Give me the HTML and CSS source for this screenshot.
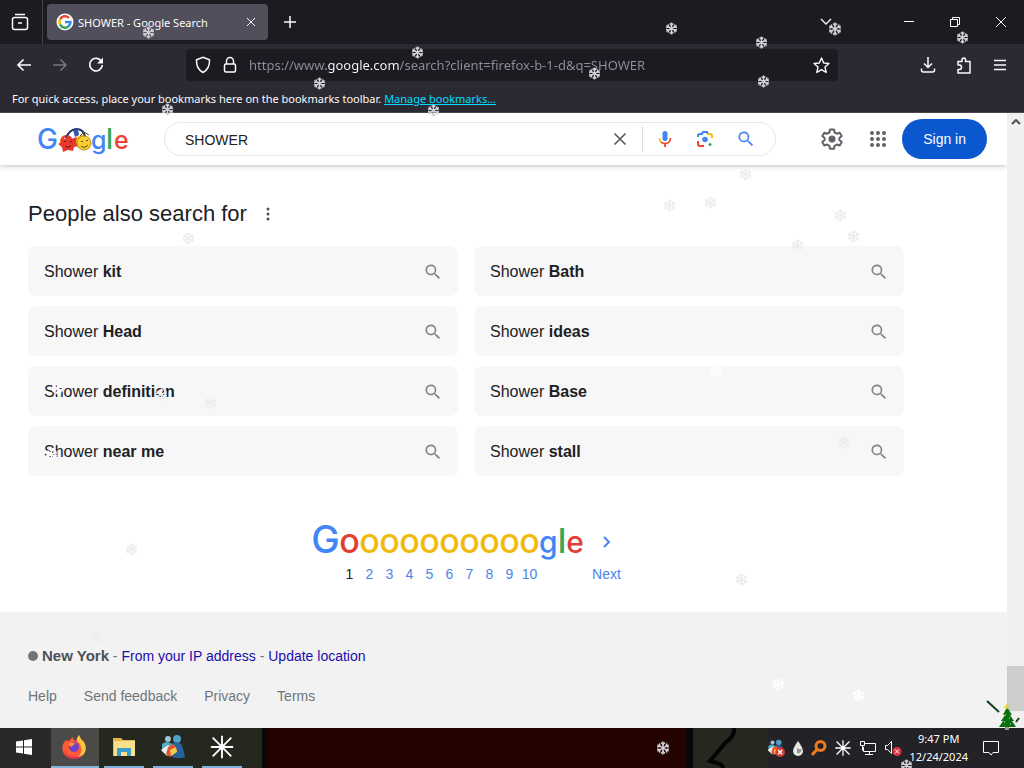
FILE: index.html
```html
<!DOCTYPE html>
<html lang="en">
<head>
  <meta charset="UTF-8">
  <title>SHOWER - Google Search</title>
  <link rel="stylesheet" href="styles.css">
</head>
<body>
  <svg class="defs" width="0" height="0" aria-hidden="true">
    <symbol id="search" viewBox="0 0 24 24">
      <path fill="currentColor" d="M15.5 14h-.8l-.3-.3A6.5 6.5 0 1 0 13.700 14.400l.3.3v.8l5 5 1.500-1.500-5-5zm-6 0a4.500 4.500 0 1 1 0-9 4.500 4.500 0 0 1 0 9z"/>
    </symbol>
    <symbol id="flake" viewBox="-7 -7 14 14">
      <g fill="none" stroke="currentColor" stroke-width="1.5">
        <path d="M0-6.500V6.500M-5.600-3.200L5.600 3.200M-5.600 3.200L5.600-3.200"/>
        <path d="M-2-5.500L0-3.500 2-5.500M-2 5.500L0 3.500 2 5.500M-5.800-1L-3-1.700-3.800-4.500M5.800 1L3 1.700 3.800 4.500M-5.800 1L-3 1.700-3.800 4.500M5.800-1L3-1.700 3.800-4.500"/>
      </g>
    </symbol>
    <symbol id="star" viewBox="0 0 28 28">
      <path d="M14 2v24M2 14h24M4 4l20 20M24 4L4 24" stroke="currentColor" stroke-width="2" fill="none"/>
      <circle cx="14" cy="14" r="3" fill="currentColor"/>
    </symbol>
    <symbol id="people" viewBox="0 0 26 26">
      <circle cx="8" cy="5" r="3" fill="#9fc3d2"/>
      <circle cx="17" cy="5" r="4" fill="#4fa0c4"/>
      <path d="M11 10q6-4 11 1l3 12q-8 3-14-1z" fill="#28629a"/>
      <path d="M2 10q5-4 10 0l2 10q-8 2-12-3z" fill="#55a9bd"/>
      <path d="M1 16l7-5 5 4-6 7z" fill="#e8eef0"/>
      <path d="M8 13l6-3 3 7-7 6-4-3z" fill="#e5532d"/>
      <path d="M10 16l6-3 1 5-6 4z" fill="#f4ca4c"/>
    </symbol>
  </svg>

  <header class="browser">
    <div class="tabs">
      <button class="icon-btn view" aria-label="Firefox View">
        <svg width="18" height="18" viewBox="0 0 18 18" fill="none" stroke="#fbfbfe" stroke-width="1.5"><path d="M4 1.500h10M7 10h4"/><rect x="1.500" y="4.500" width="15" height="12" rx="2"/></svg>
      </button>
      <div class="tab">
        <svg width="18" height="18" viewBox="0 0 18 18"><circle cx="9" cy="9" r="8.500" fill="#fff"/><g fill="none" stroke-width="2.500"><path d="M13 5A5.500 5.500 0 0 0 4 6.500" stroke="#ea4335"/><path d="M4.200 6.200a5.500 5.500 0 0 0 0 5.500" stroke="#fbbc05"/><path d="M4 11.500a5.500 5.500 0 0 0 8.800 1.600" stroke="#34a853"/><path d="M12.500 13.300A5.500 5.500 0 0 0 14.500 9H9" stroke="#4285f4"/></g></svg>
        <span class="tab-title">SHOWER - Google Search</span>
        <button class="icon-btn small" aria-label="Close tab"><svg width="10" height="10" viewBox="0 0 10 10"><path d="M1 1l8 8M9 1L1 9" stroke="#fbfbfe"/></svg></button>
      </div>
      <button class="icon-btn" aria-label="New tab"><svg width="14" height="14" viewBox="0 0 14 14"><path d="M7 1v12M1 7h12" stroke="#fbfbfe" stroke-width="1.500"/></svg></button>
      <div class="window-btns">
        <button class="icon-btn list" aria-label="List all tabs"><svg width="14" height="10" viewBox="0 0 14 10"><path d="M2 2l5 5 5-5" stroke="#fbfbfe" stroke-width="1.300" fill="none"/></svg></button>
        <button class="icon-btn" aria-label="Minimize"><svg width="12" height="12" viewBox="0 0 12 12"><path d="M1 5.500h10" stroke="#fff"/></svg></button>
        <button class="icon-btn" aria-label="Restore"><svg width="12" height="12" viewBox="0 0 12 12" fill="none" stroke="#fff"><path d="M1.500 3.500h7v7h-7zM3.500 3.500v-2h7v7h-2"/></svg></button>
        <button class="icon-btn" aria-label="Close"><svg width="12" height="12" viewBox="0 0 12 12"><path d="M1 1l10 10M11 1L1 11" stroke="#fff"/></svg></button>
      </div>
    </div>

    <div class="toolbar">
      <button class="icon-btn" aria-label="Back"><svg width="16" height="16" viewBox="0 0 16 16" fill="none" stroke="#fbfbfe" stroke-width="1.600"><path d="M15 8H2M7.500 2.500L2 8l5.500 5.500"/></svg></button>
      <button class="icon-btn" aria-label="Forward" disabled><svg width="16" height="16" viewBox="0 0 16 16" fill="none" stroke="#77767e" stroke-width="1.500"><path d="M1 8h13M8.500 2.500L14 8l-5.500 5.500"/></svg></button>
      <button class="icon-btn" aria-label="Reload"><svg width="16" height="16" viewBox="0 0 16 16"><path d="M13.500 4.500A6.300 6.300 0 1 0 14.300 8" fill="none" stroke="#fbfbfe" stroke-width="1.600"/><path d="M15 .5V6.500H9z" fill="#fbfbfe"/></svg></button>
      <div class="urlbar">
        <svg width="16" height="18" viewBox="0 0 16 18" fill="none" stroke="#fbfbfe" stroke-width="1.500"><path d="M8 1.200l6.500 2.600c.3 6-1.500 10-6.500 12.700C3 13.800 1.200 9.800 1.500 3.800z"/></svg>
        <svg width="14" height="18" viewBox="0 0 14 18" fill="none" stroke="#fbfbfe" stroke-width="1.500"><rect x="1.500" y="8" width="11" height="8" rx="1.500"/><path d="M3.500 8V5a3.500 3.500 0 0 1 7 0v3"/></svg>
        <input class="url" type="text" aria-label="Address" value="https://www.google.com/search?client=firefox-b-1-d&amp;q=SHOWER">
        <button class="icon-btn small" aria-label="Bookmark this page"><svg width="17" height="17" viewBox="0 0 17 17" fill="none" stroke="#fbfbfe" stroke-width="1.400" stroke-linejoin="round"><path d="M8.500 1l2.200 5 5.300.5-4 3.600 1.200 5.400-4.700-2.800-4.700 2.800L5 10.100 1 6.500 6.300 6z"/></svg></button>
      </div>
      <button class="icon-btn" aria-label="Downloads"><svg width="16" height="16" viewBox="0 0 16 16" fill="none" stroke="#fbfbfe" stroke-width="1.500"><path d="M8 0v10M4 6.500l4 4 4-4M1.500 11.500V13q0 2 2 2h9q2 0 2-2v-1.500"/></svg></button>
      <button class="icon-btn" aria-label="Extensions"><svg width="16" height="17" viewBox="0 0 16 17" fill="none" stroke="#fbfbfe" stroke-width="1.500" stroke-linejoin="round"><path d="M2 8V4.500h4V3q0-2 1.800-2T9.500 3v1.500h4.500V16H2v-3.500h1.500q2 0 2-2.200T3.500 8z"/></svg></button>
      <button class="icon-btn" aria-label="Menu"><svg width="14" height="12" viewBox="0 0 14 12"><path d="M1 1.500h12M1 6h12M1 10.500h12" stroke="#fbfbfe" stroke-width="1.500"/></svg></button>
    </div>

    <p class="bookmarks">For quick access, place your bookmarks here on the bookmarks toolbar. <a href="#">Manage bookmarks...</a></p>
  </header>

  <div class="viewport">
    <div class="page">
      <div class="searchbar">
        <a class="logo" href="#" aria-label="Google">
          <svg width="92" height="40" viewBox="0 -5 92 40">
            <g class="wordmark">
              <text class="blue cap" x="0" y="25">G</text>
              <text class="red" x="22" y="25">o</text>
              <text class="yellow" x="38" y="25">o</text>
              <text class="blue" x="54" y="25">g</text>
              <text class="green cap" x="69" y="25">l</text>
              <text class="red" x="77" y="25">e</text>
            </g>
            <path d="M29 14q3-8 10-9 8 0 9 8" fill="none" stroke="#23336f" stroke-width="2"/>
            <path d="M36 6l5-1 1 6-4 2z" fill="#2f58a8"/>
            <path d="M24 14l4 1 3-4 3 4 6-2-1 5 3 4-5 1-1 4-5-1-5 2-1-5-4-3 4-2z" fill="#e5392d"/>
            <path d="M27 18q1-2 2 0M33 18q1-2 2 0M28 22q3 3 6 0" fill="none" stroke="#7b1717"/>
            <circle cx="47" cy="19" r="7" fill="#f8cf32" stroke="#b7921c"/>
            <path d="M43 12l4-4 5 3M44 18q1-2 2 0M49 17q1-2 2 0M44 22q4 3 7-1" fill="none" stroke="#5c4a13"/>
          </svg>
        </a>
        <form class="searchbox">
          <input type="text" aria-label="Search" value="SHOWER">
          <button type="reset" aria-label="Clear"><svg width="14" height="14" viewBox="0 0 14 14"><path d="M1.500 1.500l11 11M12.500 1.500l-11 11" stroke="#555a5f" stroke-width="1.600"/></svg></button>
          <span class="divider"></span>
          <button type="button" aria-label="Search by voice"><svg width="16" height="18" viewBox="0 0 16 18"><rect x="5.500" y="1" width="5" height="10" rx="2.500" fill="#4285f4"/><path d="M2.500 8q0 3 2 4.600" fill="none" stroke="#fbbc05" stroke-width="1.600"/><path d="M4 12.200Q8 15 11.800 12.400 13.500 11 13.500 8" fill="none" stroke="#ea4335" stroke-width="1.600"/><path d="M8 13.500V17" stroke="#ea4335" stroke-width="1.800"/></svg></button>
          <button type="button" aria-label="Search by image"><svg width="18" height="18" viewBox="0 0 18 18" fill="none" stroke-width="2"><path d="M2 7V6q0-2 2-2h2l1-2h4l1 2" stroke="#4285f4"/><path d="M12 4h2q2 0 2 2v2" stroke="#fbbc05"/><path d="M2 11v3q0 2 2 2h4" stroke="#ea4335"/><circle cx="9" cy="9.500" r="2.800" fill="#4285f4"/><circle cx="14" cy="14.500" r="1.500" fill="#34a853"/></svg></button>
          <button type="submit" class="go" aria-label="Search"><svg width="20" height="20"><use href="#search"/></svg></button>
        </form>
        <div class="account">
          <button class="icon-btn" aria-label="Settings"><svg width="22" height="22" viewBox="0 0 22 22" fill="none" stroke="#5f6368" stroke-width="2" stroke-linejoin="round"><path d="M9 1.500h4l.6 3 2.200 1.200 2.900-1 2 3.400-2.300 2v2l2.300 2-2 3.400-2.900-1-2.200 1.300-.6 2.900H9l-.6-2.900-2.200-1.300-2.900 1-2-3.400 2.300-2v-2l-2.300-2 2-3.400 2.900 1 2.200-1.200z"/><circle cx="11" cy="11" r="2.500" fill="#5f6368"/></svg></button>
          <button class="icon-btn" aria-label="Google apps"><svg width="18" height="18" viewBox="0 0 18 18" fill="#5f6368"><circle cx="3" cy="3" r="2"/><circle cx="9" cy="3" r="2"/><circle cx="15" cy="3" r="2"/><circle cx="3" cy="9" r="2"/><circle cx="9" cy="9" r="2"/><circle cx="15" cy="9" r="2"/><circle cx="3" cy="15" r="2"/><circle cx="9" cy="15" r="2"/><circle cx="15" cy="15" r="2"/></svg></button>
          <a class="signin" href="#">Sign in</a>
        </div>
      </div>

      <main>
        <div class="heading">
          <h1>People also search for</h1>
          <button class="icon-btn small" aria-label="About this result"><svg width="4" height="14" viewBox="0 0 4 14" fill="#4d5156"><circle cx="2" cy="2" r="1.500"/><circle cx="2" cy="7" r="1.500"/><circle cx="2" cy="12" r="1.500"/></svg></button>
        </div>
        <div class="related">
          <a href="#"><span>Shower <b>kit</b></span><svg width="20" height="20"><use href="#search"/></svg></a>
          <a href="#"><span>Shower <b>Bath</b></span><svg width="20" height="20"><use href="#search"/></svg></a>
          <a href="#"><span>Shower <b>Head</b></span><svg width="20" height="20"><use href="#search"/></svg></a>
          <a href="#"><span>Shower <b>ideas</b></span><svg width="20" height="20"><use href="#search"/></svg></a>
          <a href="#"><span>Shower <b>definition</b></span><svg width="20" height="20"><use href="#search"/></svg></a>
          <a href="#"><span>Shower <b>Base</b></span><svg width="20" height="20"><use href="#search"/></svg></a>
          <a href="#"><span>Shower <b>near me</b></span><svg width="20" height="20"><use href="#search"/></svg></a>
          <a href="#"><span>Shower <b>stall</b></span><svg width="20" height="20"><use href="#search"/></svg></a>
        </div>
        <nav class="pager" aria-label="Pages">
          <span class="cell first"><i><span class="blue cap">G</span></i></span>
          <span class="cell current"><i class="red">o</i>1</span>
          <a class="cell" href="#"><i class="yellow">o</i>2</a>
          <a class="cell" href="#"><i class="yellow">o</i>3</a>
          <a class="cell" href="#"><i class="yellow">o</i>4</a>
          <a class="cell" href="#"><i class="yellow">o</i>5</a>
          <a class="cell" href="#"><i class="yellow">o</i>6</a>
          <a class="cell" href="#"><i class="yellow">o</i>7</a>
          <a class="cell" href="#"><i class="yellow">o</i>8</a>
          <a class="cell" href="#"><i class="yellow">o</i>9</a>
          <a class="cell" href="#"><i class="yellow">o</i>10</a>
          <span class="cell last"><i><span class="blue">g</span><span class="green tall">l</span><span class="red">e</span></i></span>
          <a class="cell next" href="#"><i><svg width="10" height="14" viewBox="0 0 10 14"><path d="M2 2l5 5-5 5" fill="none" stroke="#4285f4" stroke-width="2"/></svg></i>Next</a>
        </nav>
      </main>

      <footer>
        <p class="place"><span class="dot"></span><b>New York</b> - <a href="#">From your IP address</a> - <a href="#">Update location</a></p>
        <p class="links"><a href="#">Help</a><a href="#">Send feedback</a><a href="#">Privacy</a><a href="#">Terms</a></p>
      </footer>
    </div>
    <div class="scrollbar">
      <svg width="10" height="6" viewBox="0 0 10 6"><path d="M1 5l4-4 4 4" fill="none" stroke="#505050" stroke-width="2"/></svg>
      <span class="thumb"></span>
    </div>
  </div>

  <div class="taskbar">
    <svg class="doodle" width="60" height="40" viewBox="0 0 60 40"><path d="M34 0q1 8-8 14L10 33l10 3 4 4" fill="none" stroke="#050505" stroke-width="4"/></svg>
    <button class="app start" aria-label="Start"><svg width="16" height="16" viewBox="0 0 16 16" fill="#fff"><path d="M0 2.500l7-1v6H0zM8 1.300L16 0v7.500H8zM0 8.500h7v6l-7-1zM8 8.500h8V16l-8-1.300z"/></svg></button>
    <button class="app active" aria-label="Firefox"><svg width="26" height="26" viewBox="0 0 26 26"><path d="M4 6q1 1 3 1 2-3 4-4 0 3 3 4 1-4 3-6 1 4 5 7 4 8-1 13-4 4-9 4-8 0-11-7-2-7 3-12z" fill="#ff5a36"/><path d="M17 1q1 4 5 7 4 8-1 13-3 3-6 3 6-5 4-11-1-4-4-6 0-4 2-6z" fill="#ffc83c"/><path d="M2 16q4 8 12 7 5 0 7-3-2 5-9 5-8 0-10-9z" fill="#e3295f"/><circle cx="12" cy="13" r="5" fill="#6b42c8"/><path d="M6 10q4-3 8 0-3 0-4 3-2 0-4-3z" fill="#ff9335"/></svg></button>
    <button class="app" aria-label="File Explorer"><svg width="24" height="20" viewBox="0 0 24 20"><path d="M1 1h8l2 2h12v16H1z" fill="#e8b64a"/><path d="M2 4h21v15H2z" fill="#fbe08b"/><path d="M5 11h14v8h-4v-4H9v4H5z" fill="#3b9dc9"/></svg></button>
    <button class="app" aria-label="Messenger"><svg width="26" height="26"><use href="#people"/></svg></button>
    <button class="app" aria-label="Star"><svg width="26" height="26"><use href="#star"/></svg></button>
    <div class="tray">
      <svg width="18" height="18" viewBox="0 0 26 26"><use href="#people" width="26" height="26"/><circle cx="19" cy="19" r="7" fill="#d83a35"/><path d="M16 16l6 6M22 16l-6 6" stroke="#fff" stroke-width="2"/></svg>
      <svg width="12" height="16" viewBox="0 0 12 16"><path d="M6 1q5 7 5 10a5 5 0 0 1-10 0q0-3 5-10z" fill="#e8e8e4"/><path d="M5 8q3 2 5 1-1 5-5 4z" fill="#8e9896"/></svg>
      <svg width="16" height="16" viewBox="0 0 16 16" fill="none" stroke="#f27a1a" stroke-width="3"><circle cx="9.500" cy="6" r="4.500"/><path d="M6.500 9L1 15"/></svg>
      <svg width="18" height="18"><use href="#star"/></svg>
      <svg width="18" height="16" viewBox="0 0 18 16" fill="none" stroke="#fff"><path d="M6 3.500h10.500v8H4.500V7M6 14.500h8M10.500 12v2.500M1.500 1.500h4v4h-4zM3.500 5.500v5"/></svg>
      <svg width="18" height="16" viewBox="0 0 18 16"><path d="M1.500 5.500h2l4-4v12l-4-4h-2z" fill="none" stroke="#fff"/><circle cx="13" cy="11.500" r="4.500" fill="#d93242"/><path d="M11 9.500l4 4M15 9.500l-4 4" stroke="#fff"/></svg>
      <time class="clock">9:47 PM<br>12/24/2024</time>
      <svg width="18" height="18" viewBox="0 0 18 18" fill="none" stroke="#fff"><path d="M1.500 2.500h15v11H11l-2 2.500-2-2.500H1.500z"/></svg>
    </div>
    <svg class="tree" width="40" height="34" viewBox="0 0 40 34"><path d="M2 3l12 11" stroke="#173d20" stroke-width="2"/><path d="M31 24l3-4" stroke="#173d20" stroke-width="2"/><path d="M22 9l5 8h-2l4 6h-2l4 6H14l4-6h-2l4-6h-2z" fill="#08700d"/><path d="M20 29h4v3h-4z" fill="#8b9b80"/><path d="M19 9h6M22 6v5" stroke="#e5d72c" stroke-width="1.500"/><path d="M20 17h1M24 20h1M19 24h1M25 26h1" stroke="#d6ecd1"/></svg>
  </div>

  <svg class="snow" aria-hidden="true">
    <g class="bright">
      <use href="#flake" x="142" y="26" width="13" height="13"/>
      <use href="#flake" x="411" y="46" width="13" height="13"/>
      <use href="#flake" x="665" y="22" width="13" height="13"/>
      <use href="#flake" x="755" y="36" width="13" height="13"/>
      <use href="#flake" x="828" y="22" width="14" height="14"/>
      <use href="#flake" x="956" y="31" width="13" height="13"/>
      <use href="#flake" x="313" y="77" width="13" height="13"/>
      <use href="#flake" x="588" y="67" width="13" height="13"/>
      <use href="#flake" x="757" y="75" width="13" height="13"/>
      <use href="#flake" x="161" y="103" width="13" height="13"/>
      <use href="#flake" x="427" y="104" width="13" height="13"/>
      <use href="#flake" x="656" y="741" width="14" height="14"/>
      <use href="#flake" x="900" y="759" width="13" height="13"/>
    </g>
    <g class="faint">
      <use href="#flake" x="182" y="232" width="13" height="13"/>
      <use href="#flake" x="739" y="168" width="13" height="13"/>
      <use href="#flake" x="663" y="199" width="13" height="13"/>
      <use href="#flake" x="704" y="196" width="13" height="13"/>
      <use href="#flake" x="834" y="209" width="13" height="13"/>
      <use href="#flake" x="847" y="230" width="13" height="13"/>
      <use href="#flake" x="791" y="239" width="13" height="13"/>
      <use href="#flake" x="204" y="396" width="13" height="13"/>
      <use href="#flake" x="155" y="388" width="13" height="13"/>
      <use href="#flake" x="837" y="436" width="13" height="13"/>
      <use href="#flake" x="735" y="573" width="13" height="13"/>
      <use href="#flake" x="90" y="631" width="13" height="13"/>
      <use href="#flake" x="125" y="543" width="13" height="13"/>
    </g>
    <g class="white">
      <use href="#flake" x="772" y="678" width="13" height="13"/>
      <use href="#flake" x="852" y="689" width="13" height="13"/>
      <use href="#flake" x="710" y="365" width="13" height="13"/>
      <use href="#flake" x="51" y="382" width="13" height="13"/>
      <use href="#flake" x="45" y="448" width="13" height="13"/>
    </g>
  </svg>
</body>
</html>
```
FILE: styles.css
```css
* {
  box-sizing: border-box;
}
body {
  position: relative;
  display: flex;
  flex-direction: column;
  min-height: 100vh;
  margin: 0;
  overflow: hidden;
  font-family: "Liberation Sans", Arial, sans-serif;
  font-size: 14px;
  color: #202124;
  background: #fff;
}
h1, p {
  margin: 0;
}
a {
  text-decoration: none;
}
svg {
  display: block;
  flex: none;
}
button {
  padding: 0;
  border: none;
  background: none;
  cursor: pointer;
}
.defs {
  position: absolute;
}
.icon-btn {
  display: flex;
  align-items: center;
  justify-content: center;
  flex: none;
  width: 36px;
  height: 32px;
}
.icon-btn.small {
  width: 24px;
}

/* browser */
.browser {
  font-family: "Noto Sans", "Open Sans", sans-serif;
  font-size: 11px;
  color: #fbfbfe;
  background: #2b2a33;
  border-bottom: 1px solid #4a4952;
}
.tabs {
  display: flex;
  align-items: center;
  height: 44px;
  background: #1c1b22;
}
.view {
  width: 43px;
  height: 44px;
  padding-right: 2px;
  border-right: 1px solid #45444d;
}
.tab {
  display: flex;
  align-items: center;
  gap: 4px;
  width: 221px;
  height: 36px;
  margin: 0 4px;
  padding: 0 5px 0 9px;
  border-radius: 4px;
  background: #514f5b;
}
.tab-title {
  flex: 1;
  white-space: nowrap;
}
.window-btns {
  display: flex;
  margin-left: auto;
}
.window-btns .icon-btn {
  width: 46px;
}
.window-btns .list {
  margin-right: 37px;
}
.toolbar {
  display: flex;
  align-items: center;
  height: 42px;
  padding: 0 6px;
}
.urlbar {
  display: flex;
  align-items: center;
  gap: 12px;
  flex: 1;
  height: 32px;
  margin: 0 72px;
  padding: 0 5px 0 9px;
  border-radius: 4px;
  background: #1c1b22;
}
.url {
  flex: 1;
  min-width: 0;
  padding: 0;
  border: none;
  font: 13px "Noto Sans", "Open Sans", sans-serif;
  color: transparent;
  /* only the domain is bright */
  background: linear-gradient(to right, #8f8f9a 77px, #fbfbfe 77px, #fbfbfe 150px, #8f8f9a 150px);
  background-clip: text;
  -webkit-background-clip: text;
}
.bookmarks {
  height: 26px;
  padding: 0 12px;
  line-height: 26px;
}
.bookmarks a {
  color: #00ddff;
  text-decoration: underline;
}

/* page */
.viewport {
  display: flex;
  flex: 1;
}
.page {
  display: flex;
  flex-direction: column;
  flex: 1;
}
.searchbar {
  display: flex;
  align-items: center;
  height: 52px;
  padding: 0 20px 0 37px;
  box-shadow: 0 1px 5px rgba(32, 33, 36, 0.28);
}
.blue {
  color: #4285f4;
  fill: #4285f4;
}
.red {
  color: #e23f33;
  fill: #ea4335;
}
.yellow {
  color: #f0bb0c;
  fill: #fbbc05;
}
.green {
  color: #34a853;
  fill: #34a853;
}
.wordmark {
  font-family: Inter, sans-serif;
  font-size: 25px;
  font-weight: 500;
}
.wordmark .cap {
  font-size: 28px;
}
.searchbox {
  display: flex;
  align-items: center;
  flex: 0 1 612px;
  height: 34px;
  margin-left: 35px;
  padding: 0 8px 0 20px;
  border: 1px solid #e4e6e9;
  border-radius: 17px;
}
.searchbox input {
  flex: 1;
  min-width: 0;
  padding: 2px 0 0;
  border: none;
  font: 14px "Liberation Sans", Arial, sans-serif;
  color: #202124;
  background: none;
}
.searchbox button {
  display: flex;
  justify-content: center;
  width: 40px;
}
.searchbox .go {
  width: 42px;
  color: #4285f4;
}
.divider {
  width: 1px;
  height: 26px;
  margin: 0 2px;
  background: #dadce0;
}
.account {
  display: flex;
  align-items: center;
  gap: 10px;
  margin-left: auto;
}
.signin {
  margin-left: -4px;
  padding: 0 21px;
  border-radius: 20px;
  line-height: 40px;
  color: #fff;
  background: #0b57d0;
}
main {
  flex: 1;
  padding: 33px 28px 24px;
}
.heading {
  display: flex;
  align-items: center;
  gap: 9px;
}
.heading h1 {
  font-size: 22px;
  font-weight: 400;
}
.related {
  display: grid;
  grid-template-columns: 1fr 1fr;
  gap: 10px 16px;
  max-width: 876px;
  margin-top: 16px;
}
.related a {
  display: flex;
  align-items: center;
  justify-content: space-between;
  height: 50px;
  padding: 1px 15px 0 16px;
  border-radius: 8px;
  font-size: 16px;
  color: #202124;
  background: #f7f7f7;
}
.related svg {
  color: #80868b;
}
.pager {
  display: flex;
  justify-content: center;
  max-width: 876px;
  margin-top: 44px;
}
.cell {
  display: flex;
  flex-direction: column;
  align-items: center;
  width: 20px;
  line-height: 20px;
  color: #4a86e8;
}
.cell i {
  height: 44px;
  font: 500 34px/42px Inter, sans-serif;
}
.cell i span {
  line-height: 0;
}
.cell .cap {
  font-size: 38px;
}
.first {
  width: 28px;
}
.last {
  width: 44px;
}
.last i span {
  font-size: 30px;
}
.last i .tall {
  font-size: 34px;
}
.current {
  color: #202124;
}
.next {
  width: 28px;
  margin-left: 9px;
}
.next i {
  display: flex;
  align-items: center;
}
footer {
  padding: 34px 28px 22px;
  color: #70757a;
  background: #f2f2f2;
}
footer p {
  line-height: 20px;
}
.place b {
  font-size: 15px;
  color: #4d5156;
}
.place a {
  color: #1a0dab;
}
.dot {
  display: inline-block;
  width: 10px;
  height: 10px;
  margin-right: 4px;
  border-radius: 50%;
  background: #70757a;
}
.links {
  display: flex;
  gap: 27px;
  margin-top: 20px;
}
.links a {
  color: #70757a;
}
.scrollbar {
  display: flex;
  flex-direction: column;
  align-items: center;
  justify-content: space-between;
  width: 17px;
  padding: 6px 0 17px;
  background: #f0f0f0;
}
.thumb {
  width: 17px;
  height: 45px;
  background: #cdcdcd;
}

/* taskbar */
.taskbar {
  position: relative;
  display: flex;
  height: 40px;
  background: linear-gradient(to right, #25281e 262px, #0a0808 262px, #0a0808 268px, #240400 268px, #240400 686px, #080606 686px, #080606 693px, #26281f 693px, #26281f 764px, #232327 768px);
}
.app {
  display: flex;
  align-items: center;
  justify-content: center;
  width: 40px;
  margin-right: 9px;
  border-bottom: 2px solid #83b2dc;
  color: #fff;
}
.start {
  width: 51px;
  margin: 0;
  padding-right: 3px;
  border-bottom-color: #28282a;
  background: #28282a;
}
.active {
  width: 48px;
  margin-right: 5px;
  background: #4a4a49;
}
.tray {
  display: flex;
  align-items: center;
  gap: 7px;
  margin-left: auto;
  padding-right: 24px;
  color: #fff;
}
.clock {
  font: 11px/18px "Noto Sans", "Open Sans", sans-serif;
  text-align: center;
}
.tray .clock {
  margin-right: 7px;
}
.doodle {
  position: absolute;
  left: 700px;
  top: 0;
}
.tree {
  position: absolute;
  right: -1px;
  top: -30px;
}

.snow {
  position: absolute;
  inset: 0;
  width: 100%;
  height: 100%;
  pointer-events: none;
}
.bright {
  color: #d2d2d8;
}
.faint {
  color: #ededed;
}
.white {
  color: #fff;
}
```
